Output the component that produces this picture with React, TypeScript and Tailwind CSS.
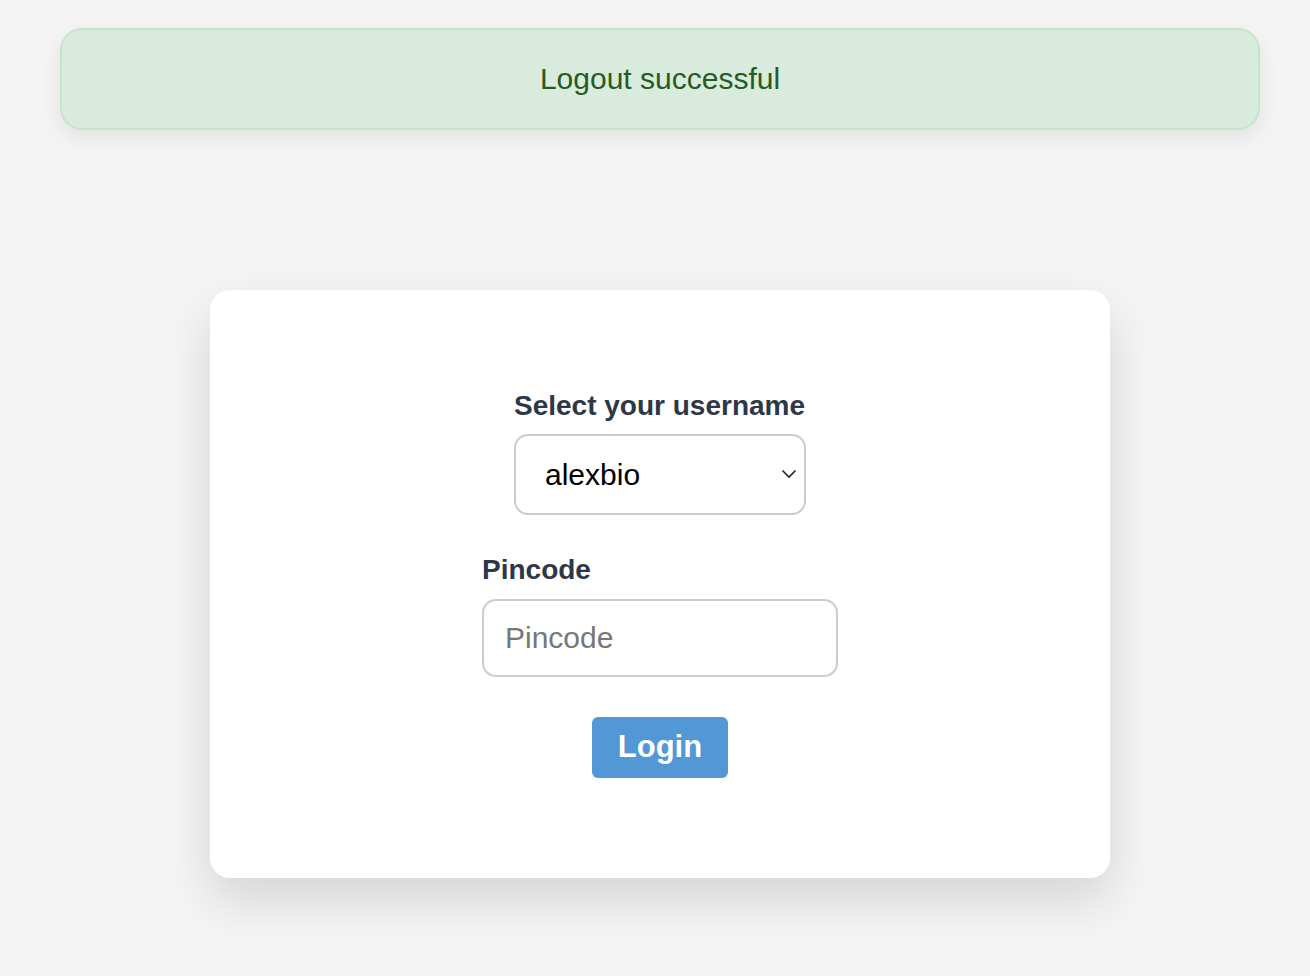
import { useState } from 'react'

export default function App() {
  const [user, setUser] = useState('alexbio')
  const [pin, setPin] = useState('')

  return (
    <div className="min-h-screen bg-[#f4f4f4] font-['Liberation_Sans',Arial,sans-serif] flex flex-col items-center pt-[28px] pl-[10px]">
      <div className="w-[1200px] h-[102px] rounded-[22px] border-2 border-[#c6e4c9] bg-[#d9ebdc] shadow-[0_8px_22px_rgba(0,0,0,0.08)] flex items-center justify-center pb-[2px]">
        <p className="text-[30px] text-[#285b24]">Logout successful</p>
      </div>

      <div className="mt-[160px] w-[900px] h-[588px] rounded-[20px] bg-white shadow-[0_22px_50px_rgba(0,0,0,0.13)] flex flex-col items-center pt-[100px]">
        <div className="flex flex-col items-start">
          <label className="text-[28px] leading-[32px] font-bold text-[#2d3748]">Select your username</label>
          <div className="relative mt-[12px]">
            <select
              value={user}
              onChange={(e) => setUser(e.target.value)}
              className="appearance-none w-[292px] h-[81px] rounded-[14px] border-2 border-[#cccccc] bg-white pl-[29px] text-[30px] text-black outline-none"
            >
              <option value="alexbio">alexbio</option>
            </select>
            <svg className="absolute right-[9px] top-[35px] pointer-events-none" width="16" height="10" viewBox="0 0 16 10" fill="none">
              <path d="M1.5 1.5 L8 8 L14.5 1.5" stroke="#222" strokeWidth="1.6" />
            </svg>
          </div>
        </div>

        <div className="mt-[39px] flex flex-col items-start">
          <label className="text-[28px] leading-[32px] font-bold text-[#2d3748]">Pincode</label>
          <input
            type="password"
            value={pin}
            onChange={(e) => setPin(e.target.value)}
            placeholder="Pincode"
            className="mt-[13px] w-[356px] h-[78px] rounded-[14px] border-2 border-[#cccccc] px-[21px] text-[30px] placeholder:text-[#777777] outline-none"
          />
        </div>

        <button className="mt-[40px] w-[136px] h-[61px] rounded-[6px] bg-[#5297d6] text-white text-[31px] font-bold">
          Login
        </button>
      </div>
    </div>
  )
}
